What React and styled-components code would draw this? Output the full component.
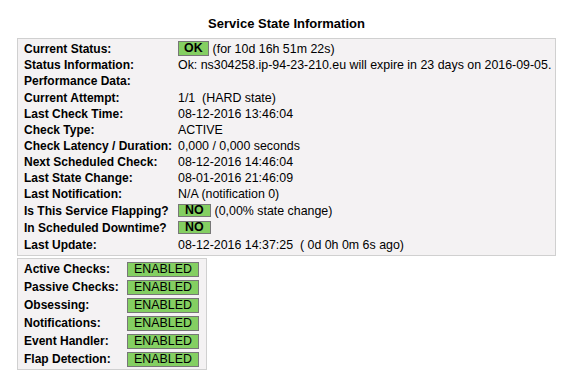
import React from "react";
import styled, { createGlobalStyle } from "styled-components";

const GlobalStyle = createGlobalStyle`
  html, body { margin: 0; padding: 0; background: #ffffff; }
  body { font-family: "Liberation Sans", Arial, sans-serif; font-size: 12.4px; color: #000; }
`;

const Page = styled.div`
  padding: 16px 0 0 17px;
`;

const Wrapper = styled.div`
  width: 539px;
`;

const Title = styled.div`
  font-size: 13px;
  line-height: 15px;
  font-weight: bold;
  text-align: center;
  margin-bottom: 7px;
`;

const StateBox = styled.div`
  box-sizing: border-box;
  border: 1px solid #d0d0d0;
  background: #f4f2f3;
  padding: 1px 6px 2px 6px;
  display: flex;
  flex-direction: column;
`;

const Row = styled.div`
  display: grid;
  grid-template-columns: ${(p) => p.$labelWidth || 154}px auto;
  align-items: center;
  height: ${(p) => p.$h}px;
`;

const Label = styled.div`
  font-size: 12px;
  font-weight: bold;
  line-height: 14px;
  white-space: nowrap;
`;

const Value = styled.div`
  display: flex;
  align-items: center;
  gap: 4px;
  line-height: 14px;
  white-space: pre;
`;

const Badge = styled.span`
  box-sizing: border-box;
  display: inline-flex;
  align-items: center;
  justify-content: center;
  height: ${(p) => p.$h}px;
  padding: 0 ${(p) => p.$pad}px;
  background: #84cf62;
  border: 1px solid #777777;
  font-weight: bold;
  line-height: 1;
`;

const ChecksBox = styled.div`
  box-sizing: border-box;
  width: 190px;
  margin-top: 2px;
  border: 1px solid #d0d0d0;
  background: #f4f2f3;
  padding: 1px 7px 1px 6px;
  display: flex;
  flex-direction: column;
`;

const Enabled = styled.span`
  box-sizing: border-box;
  display: inline-flex;
  align-items: center;
  justify-content: center;
  width: 72px;
  height: 15px;
  background: #84cf62;
  border: 1px solid #777777;
  line-height: 1;
`;

const stateRows = [
  { label: "Current Status:", h: 17, badge: { text: "OK", h: 15, pad: 5 }, value: "(for 10d 16h 51m 22s)" },
  { label: "Status Information:", h: 16, value: "Ok: ns304258.ip-94-23-210.eu will expire in 23 days on 2016-09-05." },
  { label: "Performance Data:", h: 16, value: "" },
  { label: "Current Attempt:", h: 17, value: "1/1  (HARD state)" },
  { label: "Last Check Time:", h: 16, value: "08-12-2016 13:46:04" },
  { label: "Check Type:", h: 16, value: "ACTIVE" },
  { label: "Check Latency / Duration:", h: 16, value: "0,000 / 0,000 seconds" },
  { label: "Next Scheduled Check:", h: 16, value: "08-12-2016 14:46:04" },
  { label: "Last State Change:", h: 16, value: "08-01-2016 21:46:09" },
  { label: "Last Notification:", h: 16, value: "N/A (notification 0)" },
  { label: "Is This Service Flapping?", h: 17, badge: { text: "NO", h: 13, pad: 6 }, value: "(0,00% state change)" },
  { label: "In Scheduled Downtime?", h: 17, badge: { text: "NO", h: 13, pad: 6 }, value: "" },
  { label: "Last Update:", h: 17, value: "08-12-2016 14:37:25  ( 0d 0h 0m 6s ago)" },
];

const checkRows = [
  "Active Checks:",
  "Passive Checks:",
  "Obsessing:",
  "Notifications:",
  "Event Handler:",
  "Flap Detection:",
];

export default function App() {
  return (
    <>
      <GlobalStyle />
      <Page>
        <Wrapper>
          <Title>Service State Information</Title>
          <StateBox>
            {stateRows.map((r) => (
              <Row key={r.label} $h={r.h}>
                <Label>{r.label}</Label>
                <Value>
                  {r.badge && (
                    <Badge $h={r.badge.h} $pad={r.badge.pad}>
                      {r.badge.text}
                    </Badge>
                  )}
                  {r.value && <span>{r.value}</span>}
                </Value>
              </Row>
            ))}
          </StateBox>
          <ChecksBox>
            {checkRows.map((label) => (
              <Row key={label} $h={18} $labelWidth={103}>
                <Label>{label}</Label>
                <Value>
                  <Enabled>ENABLED</Enabled>
                </Value>
              </Row>
            ))}
          </ChecksBox>
        </Wrapper>
      </Page>
    </>
  );
}
